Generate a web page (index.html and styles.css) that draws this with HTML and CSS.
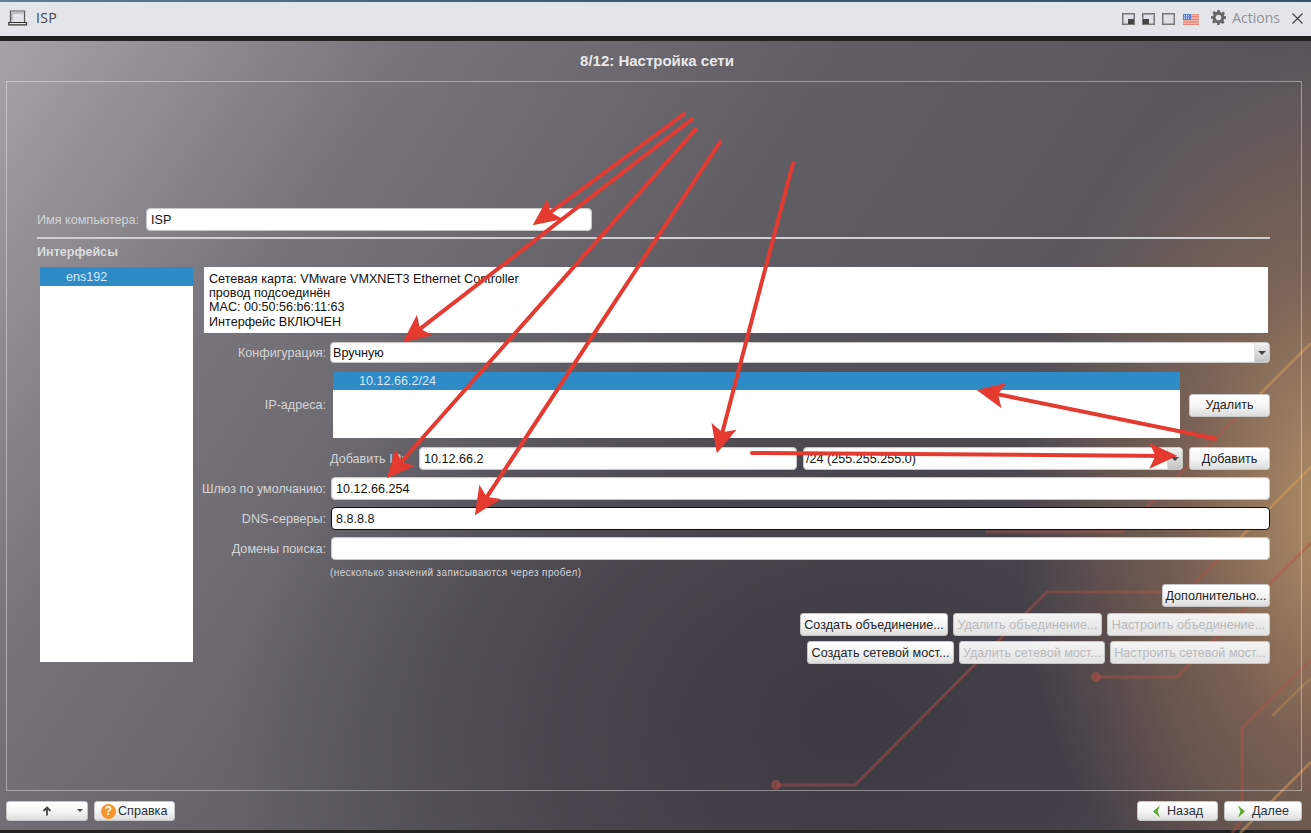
FILE: index.html
```html
<!DOCTYPE html>
<html lang="ru">
<head>
<meta charset="utf-8">
<title>ISP</title>
<link rel="stylesheet" href="styles.css">
</head>
<body>
<div class="app">
  <div class="topline"></div>
  <header class="titlebar">
    <svg class="laptop" width="20" height="16" viewBox="0 0 20 16"><path d="M2.500 12V1H16.500V12" fill="none" stroke="#555" stroke-width="1.200"/><path d="M4 11V3H15.500" fill="none" stroke="#9a9a9a" stroke-width="1"/><path d="M.8 12.500H18.500V14.800H.8Z" fill="none" stroke="#333" stroke-width="1.200"/></svg>
    <span class="vm-name">ISP</span>
    <div class="spacer"></div>
    <div class="win-icons">
      <svg width="13" height="12" viewBox="0 0 13 12"><rect x=".75" y=".75" width="11.500" height="10.500" fill="#dfe0e5" stroke="#777" stroke-width="1.500"/><rect x="6" y="6" width="6" height="5" fill="#444"/></svg>
      <svg width="13" height="12" viewBox="0 0 13 12"><rect x=".75" y=".75" width="11.500" height="10.500" fill="#dfe0e5" stroke="#777" stroke-width="1.500"/><rect x="1" y="6" width="6" height="5" fill="#444"/></svg>
      <svg width="13" height="12" viewBox="0 0 13 12"><rect x=".75" y=".75" width="11.500" height="10.500" fill="#dfe0e5" stroke="#777" stroke-width="1.500"/></svg>
      <svg class="flag" width="16" height="11" viewBox="0 0 16 11"><rect width="16" height="11" fill="#f3d9d4"/><path d="M0 .8H16M0 2.400H16M0 4H16M0 5.600H16M0 7.200H16M0 8.800H16M0 10.400H16" stroke="#e2705f" stroke-width=".9"/><rect width="8" height="6" fill="#5b7fd6"/><path d="M1 1.500H7M1 3H7M1 4.500H7" stroke="#e6ecff" stroke-width=".8" stroke-dasharray="1 1"/></svg>
    </div>
    <svg class="gear" width="15" height="15" viewBox="0 0 24 24"><path fill="#666" fill-rule="evenodd" d="M10 0h4l.6 3.200 2.300 1 2.700-1.900 2.800 2.800-1.900 2.700 1 2.300L24 10v4l-3.200.6-1 2.300 1.900 2.700-2.800 2.800-2.700-1.900-2.300 1L14 24h-4l-.6-3.200-2.300-1-2.700 1.900-2.800-2.800 1.900-2.700-1-2.300L0 14v-4l3.200-.6 1-2.300-1.900-2.700 2.800-2.800 2.700 1.900 2.300-1zM12 7.500a4.500 4.500 0 1 0 0 9 4.500 4.500 0 0 0 0-9z"/></svg>
    <span class="actions">Actions</span>
    <svg class="close" width="11" height="11" viewBox="0 0 11 11"><path d="M.5.500L10.500 10.500M10.500.500L.5 10.500" stroke="#444" stroke-width="1.200"/></svg>
  </header>
  <div class="blackbar"></div>

  <main class="installer">
    <svg class="circuit" width="1311" height="833" viewBox="0 0 1311 833">
      <g fill="none" stroke-width="3">
        <path class="red" d="M776 785H855L1047 592H1186L1240 538"/>
        <path class="tan" d="M1240 538L1311 467"/>
        <path class="red" d="M1096 677H1177L1311 543"/>
        <path class="red" d="M985 532H1122L1240 414"/>
        <path class="tan" d="M1240 414L1311 343"/>
        <path class="red" d="M1311 660L1242 728V820L1232 833"/>
        <path class="tan" d="M1240 833L1311 762"/>
        <path class="faint" d="M1272 716L1311 678"/>
      </g>
      <circle cx="776" cy="785" r="5" class="dot"/>
      <circle cx="1096" cy="677" r="5" class="dot"/>
    </svg>

    <h1 class="step-title">8/12: Настройка сети</h1>

    <section class="frame">
      <div class="host-row">
        <label class="lbl-host">Имя компьютера:</label>
        <div class="field host-field">ISP</div>
      </div>
      <div class="sep"></div>
      <div class="section-title">Интерфейсы</div>

      <div class="iface">
        <div class="iface-list">
          <div class="iface-item">ens192</div>
        </div>
        <div class="pane">
          <div class="info">
            <div>Сетевая карта: VMware VMXNET3 Ethernet Controller</div>
            <div>провод подсоединён</div>
            <div>MAC: 00:50:56:b6:11:63</div>
            <div>Интерфейс ВКЛЮЧЕН</div>
          </div>

          <div class="row row-config">
            <label class="lbl">Конфигурация:</label>
            <div class="field select grow config-select"><span class="val-tight">Вручную</span><span class="caret-box"><i class="caret"></i></span></div>
          </div>

          <div class="row row-ip">
            <label class="lbl">IP-адреса:</label>
            <div class="ip-list"><div class="ip-item">10.12.66.2/24</div></div>
            <button class="btn btn-del">Удалить</button>
          </div>

          <div class="row row-add">
            <label class="lbl-add">Добавить IP:</label>
            <div class="field ip-input">10.12.66.2</div>
            <div class="field select mask-select"><span class="val-tight">/24 (255.255.255.0)</span><span class="caret-box"><i class="caret"></i></span></div>
            <button class="btn btn-add">Добавить</button>
          </div>

          <div class="row row-gw">
            <label class="lbl">Шлюз по умолчанию:</label>
            <div class="field grow wide">10.12.66.254</div>
          </div>
          <div class="row row-dns">
            <label class="lbl">DNS-серверы:</label>
            <div class="field grow wide focus">8.8.8.8</div>
          </div>
          <div class="row row-dns">
            <label class="lbl">Домены поиска:</label>
            <div class="field grow wide"></div>
          </div>
          <div class="hint">(несколько значений записываются через пробел)</div>

          <div class="btn-row btn-row-adv"><button class="btn w-adv">Дополнительно...</button></div>
          <div class="btn-row btn-row-bond">
            <button class="btn w-b1">Создать объединение...</button>
            <button class="btn off w-b2">Удалить объединение...</button>
            <button class="btn off w-b3">Настроить объединение...</button>
          </div>
          <div class="btn-row btn-row-bridge">
            <button class="btn w-m1">Создать сетевой мост...</button>
            <button class="btn off w-m2">Удалить сетевой мост...</button>
            <button class="btn off w-m3">Настроить сетевой мост...</button>
          </div>
        </div>
      </div>
    </section>

    <footer class="bottom">
      <button class="btn btn-up">
        <svg width="10" height="10" viewBox="0 0 10 10"><path d="M5 9.500V2M1.500 5L5 1.500 8.500 5" fill="none" stroke="#444" stroke-width="1.800"/></svg>
        <i class="caret caret-up"></i>
      </button>
      <button class="btn btn-help"><span class="help-ico">?</span>Справка</button>
      <div class="spacer"></div>
      <button class="btn btn-back">
        <svg width="9" height="13" viewBox="0 0 9 13"><path d="M8 .5L1 6.500 8 12.500 5.500 6.500Z" fill="#58a82c"/></svg>Назад
      </button>
      <button class="btn btn-next">
        <svg width="9" height="13" viewBox="0 0 9 13"><path d="M1 .5L8 6.500 1 12.500 3.500 6.500Z" fill="#58a82c"/></svg>Далее
      </button>
    </footer>
  </main>

  <svg class="arrows" width="1311" height="833" viewBox="0 0 1311 833">
    <defs>
      <marker id="head" markerUnits="userSpaceOnUse" markerWidth="28" markerHeight="26" viewBox="0 0 27 25" refX="19" refY="12.500" orient="auto">
        <path d="M27 12.500L0 0 6 12.500 0 25Z" fill="#e43a2f"/>
      </marker>
    </defs>
    <g stroke="#e43a2f" stroke-width="4" stroke-linecap="round">
      <line x1="684" y1="114" x2="539.400" y2="220.300" marker-end="url(#head)"/>
      <line x1="692" y1="119" x2="409.300" y2="337.100" marker-end="url(#head)"/>
      <line x1="696" y1="129" x2="392.300" y2="472" marker-end="url(#head)"/>
      <line x1="720" y1="142" x2="479.400" y2="508.300" marker-end="url(#head)"/>
      <line x1="793" y1="163" x2="719" y2="445.300" marker-end="url(#head)"/>
      <line x1="752" y1="453" x2="1169" y2="455.900" marker-end="url(#head)"/>
      <line x1="1215" y1="438.500" x2="984.800" y2="391.600" marker-end="url(#head)"/>
    </g>
  </svg>
</div>
</body>
</html>
```
FILE: styles.css
```css
* { box-sizing: border-box; }
html, body { margin: 0; padding: 0; }
body { width: 1311px; height: 833px; overflow: hidden; font: 12.600px/14px "Liberation Sans", Arial, sans-serif; color: #111; }
button { font: inherit; margin: 0; }
label { display: block; white-space: nowrap; }
.app { position: relative; width: 1311px; height: 833px; display: flex; flex-direction: column; overflow: hidden; background: #222; }
.spacer { flex: 1; }

.topline { height: 2px; background: linear-gradient(90deg, #5d7f96, #3d5f76 40%, #33536a); }
.titlebar { height: 34px; display: flex; align-items: center; background: #e4e5ea; padding: 0 4px 3px 8px; }
.laptop { margin-top: 1px; }
.vm-name { margin-left: 8px; font: 14px "Open Sans", sans-serif; color: #444; letter-spacing: .3px; }
.win-icons { display: flex; align-items: center; gap: 7px; margin-right: 12px; margin-top: 3px; }
.flag { margin-left: 1px; }
.actions { margin-left: 6px; font: 14px "Open Sans", sans-serif; color: #8e9095; }
.close { margin-left: 12px; margin-right: 4px; margin-top: 2px; }
.blackbar { height: 5px; background: #222; }

.installer {
  position: relative; flex: 1; display: flex; flex-direction: column;
  padding: 0 9px 0 6px; margin-bottom: 3px;
  background:
    radial-gradient(ellipse 340px 480px at 1355px 470px, rgba(192,152,104,.95), rgba(150,112,84,.6) 50%, rgba(110,84,72,0) 100%),
    radial-gradient(ellipse 240px 260px at 1311px 790px, rgba(120,90,70,.25), rgba(120,90,70,0) 100%),
    radial-gradient(ellipse 620px 460px at 850px 680px, rgba(60,56,66,.95), rgba(60,56,66,.6) 50%, rgba(60,56,66,0) 100%),
    linear-gradient(124deg, #a5a3a7 0, #77757b 22%, #615f65 45%, #57545b 70%, #524d55 100%);
}
.circuit { position: absolute; left: 0; top: -41px; }
.red { stroke: rgba(186,82,68,.42); }
.tan { stroke: rgba(214,158,92,.5); }
.faint { stroke: rgba(214,158,92,.28); }
.dot { fill: rgba(170,78,68,.6); }

.step-title { position: relative; margin: 12px 0 0; padding-left: 6px; height: 16px; font: bold 15px/16px "Liberation Sans", sans-serif; color: #e8e8ea; text-align: center; }
.frame { position: relative; height: 710px; margin-top: 12px; padding: 126px 31px 0 30px; border: 1px solid rgba(255,255,255,.4); }

.field { display: flex; align-items: center; height: 23px; padding: 0 5px; background: #fff; border: 1px solid #c9c9c9; border-radius: 4px; box-shadow: inset 0 0 1px rgba(0,0,0,.25); color: #111; }
.field.focus { border-color: #111; }
.grow { flex: 1; }

.host-row { display: flex; align-items: center; }
.lbl-host { width: 109px; color: #d4d4d7; }
.host-field { width: 446px; height: 23px; padding-left: 4px; }
.sep { height: 2px; margin-top: 6px; background: #cfcfd1; }
.section-title { margin-top: 6px; height: 15px; font-weight: bold; color: #dcdcde; line-height: 15px; }

.iface { display: flex; margin-top: 7px; }
.iface-list { width: 153px; height: 395px; margin-left: 3px; background: #fff; }
.iface-item { height: 19px; padding: 1px 0 0 26px; line-height: 19px; background: #2e8bc7; color: #d8e8f4; }
.pane { width: 1066px; margin-left: 11px; }

.info { width: 1064px; height: 66px; padding: 4.500px 5px 0; background: #fff; color: #111; line-height: 14.400px; }

.row { display: flex; align-items: center; }
.lbl { display: flex; justify-content: flex-end; width: 122px; margin-right: 4px; color: #d4d4d7; }
.row-config { margin-top: 9px; height: 21px; }
.config-select { height: 21px; }
.select { position: relative; padding-left: 2px; padding-right: 0; overflow: hidden; }
.val-tight { flex: 1; color: #111; }
.caret-box { display: flex; align-items: center; justify-content: center; align-self: stretch; width: 15px; background: linear-gradient(#f2f2f2, #c4c4c4); border-left: 1px solid #ddd; }
.caret { display: block; width: 0; height: 0; border-left: 4px solid transparent; border-right: 4px solid transparent; border-top: 4px solid #444; }

.row-ip { margin-top: 9px; height: 66px; }
.ip-list { width: 847px; height: 66px; margin-left: 3px; background: #fff; }
.ip-item { height: 18px; padding-left: 26px; line-height: 18px; background: #2e8bc7; color: #d8e8f4; }
.btn { display: flex; align-items: center; justify-content: center; height: 23px; padding: 0; background: linear-gradient(#fff 0, #f4f4f4 55%, #dcdcdc 100%); border: 1px solid #c6c6c6; border-radius: 3px; color: #222; white-space: nowrap; }
.btn.off { color: #b9b9bb; background: linear-gradient(#f4f4f4, #e3e3e3); }
.btn-del { width: 81px; margin-left: 9px; }

.row-add { margin-top: 9px; height: 23px; }
.lbl-add { width: 89px; margin-left: 126px; color: #d4d4d7; }
.ip-input { width: 378px; padding-left: 4px; }
.mask-select { width: 380px; margin-left: 6px; }
.btn-add { width: 81px; margin-left: 6px; }
.row-gw { margin-top: 7px; height: 23px; }
.row-dns { margin-top: 7px; height: 23px; }
.wide { margin-left: 1px; padding-left: 4px; }

.hint { margin: 6px 0 0 126px; height: 13px; font-size: 10px; line-height: 13px; letter-spacing: .39px; color: #d4d4d7; }

.btn-row { display: flex; justify-content: flex-end; }
.btn-row-adv { margin-top: 5px; }
.btn-row-bond { margin-top: 6px; gap: 5px; }
.btn-row-bridge { margin-top: 5px; gap: 5px; }
.w-adv { width: 108px; }
.w-b1 { width: 148px; }
.w-b2 { width: 149px; }
.w-b3 { width: 163px; }
.w-m1 { width: 147px; }
.w-m2 { width: 146px; }
.w-m3 { width: 160px; }

.bottom { position: relative; display: flex; align-items: center; margin-top: 10px; height: 20px; }
.bottom .btn { height: 20px; }
.btn-up { position: relative; width: 82px; }
.caret-up { position: absolute; right: 4px; top: 7px; border-left-width: 3px; border-right-width: 3px; border-top-width: 3px; }
.btn-help { width: 81px; margin-left: 6px; gap: 2px; color: #2a2f38; justify-content: flex-start; padding-left: 6px; }
.help-ico { display: block; width: 15px; height: 15px; border-radius: 50%; background: #f7942b; color: #fff; font-weight: bold; font-size: 12px; line-height: 15px; text-align: center; }
.btn-back { width: 81px; gap: 6px; color: #2a2f38; }
.btn-next { width: 78px; margin-left: 6px; gap: 6px; color: #2a2f38; }

.arrows { position: absolute; left: 0; top: 0; pointer-events: none; }
```
